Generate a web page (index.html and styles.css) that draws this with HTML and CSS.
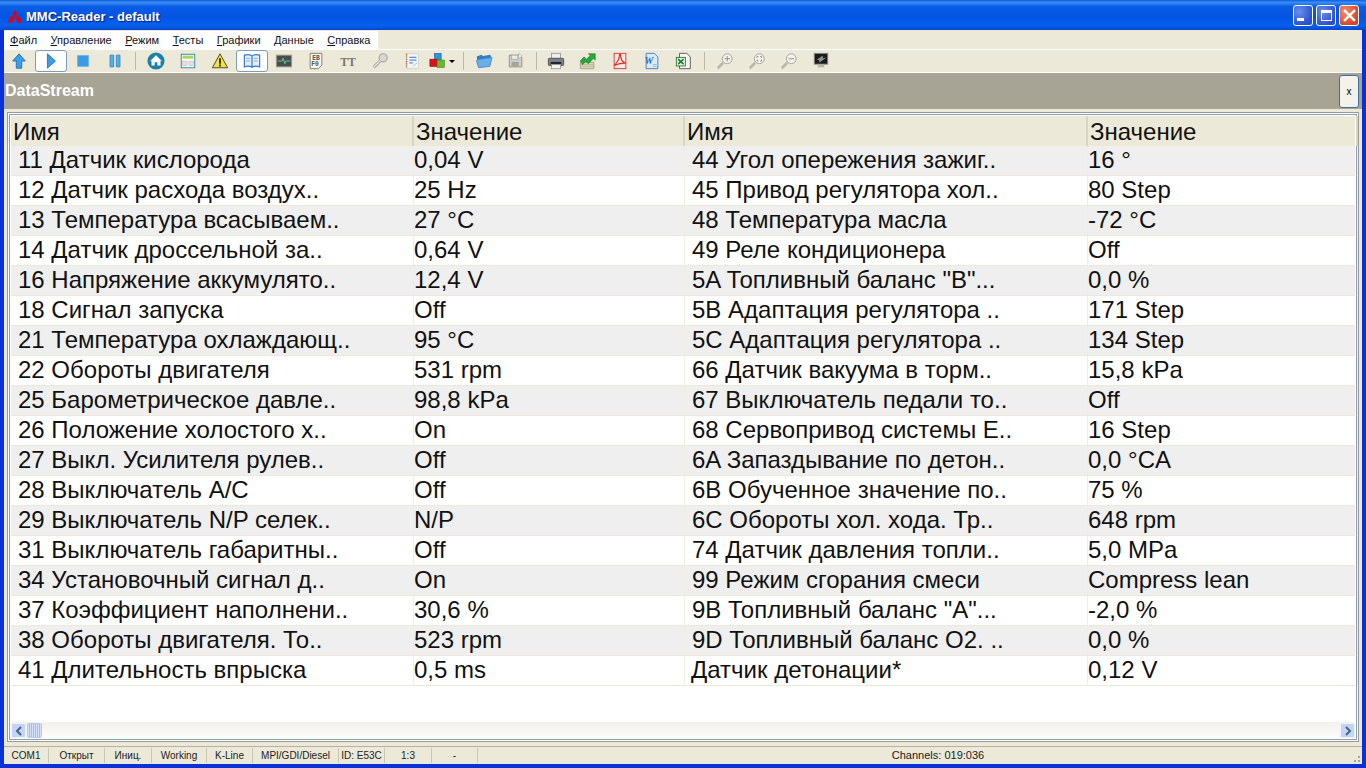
FILE: index.html
```html
<!DOCTYPE html>
<html lang="ru">
<head>
  <meta charset="UTF-8" />
  <title>MMC-Reader - default</title>
  <link rel="stylesheet" href="styles.css">
</head>
<body>
<div class="window">

  <div class="titlebar">
    <svg class="logo" viewBox="0 0 16 14"><path fill="#e0000f" d="M8 0l3.200 3.500L8 7 4.800 3.500zM8 7h5.200L16 14h-5.200zM8 7H2.800L0 14h5.200z"/></svg>
    <span class="title-text">MMC-Reader - default</span>
    <div class="caption-btns">
      <div class="cap-btn"><span class="cap-min"></span></div>
      <div class="cap-btn"><span class="cap-max"></span></div>
      <div class="cap-btn cap-close">
        <svg viewBox="0 0 12 12"><path d="M1 1l10 10M11 1L1 11" stroke="#fff" stroke-width="2.200" fill="none"/></svg>
      </div>
    </div>
  </div>

  <div class="client">
    <div class="menubar">
      <div class="menu-items">
        <span><u>Ф</u>айл</span>
        <span><u>У</u>правление</span>
        <span><u>Р</u>ежим</span>
        <span><u>Т</u>есты</span>
        <span><u>Г</u>рафики</span>
        <span><u>Д</u>анные</span>
        <span><u>С</u>правка</span>
      </div>
    </div>

    <div class="toolbar">
      <div class="tool"><svg viewBox="0 0 20 20"><path fill="#37a0e8" stroke="#1b6fb5" d="M10 2l7 8h-4v8H7v-8H3z"/></svg></div>
      <div class="tool active"><svg viewBox="0 0 20 20"><path fill="#3f9be0" stroke="#2a77bb" d="M6 2l9 8-9 8z"/></svg></div>
      <div class="tool"><svg viewBox="0 0 20 20"><rect x="4" y="4" width="12" height="12" fill="#3c9be4" stroke="#6fb5ea"/></svg></div>
      <div class="tool"><svg viewBox="0 0 20 20"><path fill="#5aaee8" stroke="#2d86cc" d="M4.500 3.500h4v13h-4zM11.500 3.500h4v13h-4z"/></svg></div>
      <div class="tool-sep"></div>
      <div class="tool"><svg viewBox="0 0 20 20"><circle cx="10" cy="10" r="9.500" fill="#1a82a8"/><path fill="#fff" d="M10 3.500l6.500 6.500H15v5h-3.500v-3.500h-3V15H5v-5H3.500z"/></svg></div>
      <div class="tool"><svg viewBox="0 0 20 20"><rect x="2.500" y="2.500" width="15" height="15" fill="#fff" stroke="#2a80a8"/><rect x="4" y="4" width="12" height="3.500" fill="#a9d85a"/><rect x="4" y="10" width="5" height="5" fill="#e2e2dc" stroke="#aaa" stroke-width=".5"/><rect x="11" y="10" width="5" height="5" fill="#e2e2dc" stroke="#aaa" stroke-width=".5"/></svg></div>
      <div class="tool"><svg viewBox="0 0 20 20"><path fill="#f3e23a" stroke="#3c3c30" d="M10 2l8.500 15.500h-17z"/><path stroke="#222" stroke-width="2" d="M10 7v6M10 14v2"/></svg></div>
      <div class="tool active"><svg viewBox="0 0 20 20"><path fill="#e3eefa" stroke="#3a78bd" stroke-width="1.300" d="M1.500 3.500c3-1 6-1 8.500 .8 2.500-1.800 5.500-1.800 8.500-.8v13c-3-1-6-1-8.500 .5-2.500-1.500-5.500-1.500-8.500-.5zM10 4.300V17"/><path stroke="#7fa8d6" d="M3.500 7h4.500M3.500 10h4.500M12 7h4.500M12 10h4.500"/></svg></div>
      <div class="tool"><svg viewBox="0 0 20 20"><rect x="1.500" y="3.500" width="17" height="13" fill="#4c4c4c" stroke="#9c9c94"/><path stroke="#5fd39a" fill="none" d="M3 10h5l1-3 2 6 1-3h5"/></svg></div>
      <div class="tool"><svg viewBox="0 0 20 20"><path fill="#f6f5ee" stroke="#77776f" d="M3.500 1.500h13v13l-4 4h-9z"/><text class="ico-hex" x="10" y="8.500">EB</text><text class="ico-hex" x="9" y="15.500">F0</text></svg></div>
      <div class="tool"><svg viewBox="0 0 20 20"><text class="ico-tt" x="10" y="15">TT</text></svg></div>
      <div class="tool"><svg viewBox="0 0 20 20"><circle cx="13.500" cy="6.500" r="4.500" fill="#d9d8d0" stroke="#a5a49c" stroke-width="1.200"/><path stroke="#a5a49c" stroke-width="3.500" d="M10.500 9.500L3 17"/><path stroke="#e5e4dc" stroke-width="1.500" d="M10.500 9.500L3 17"/></svg></div>
      <div class="tool"><svg viewBox="0 0 20 20"><rect x="4" y="2" width="13" height="16" fill="#f5f5f3" stroke="#c9c9c2" stroke-width=".7"/><path stroke="#b5562c" stroke-width="1.600" stroke-dasharray="1 1" d="M4 2v16"/><path stroke="#5f8fd6" stroke-width="1.300" d="M7 6h8M7 9h8M7 12h4"/><path stroke="#a9bfe0" d="M11 16l5-4"/></svg></div>
      <div class="tool tool-wide">
        <svg viewBox="0 0 20 20"><rect x="6" y="1.500" width="7.500" height="7.500" fill="#2a95dc" stroke="#17689f" stroke-width=".7"/><rect x="1" y="8" width="8" height="8" fill="#de1020" stroke="#991018" stroke-width=".7"/><rect x="9" y="9" width="8" height="8" fill="#6bb82c" stroke="#44821a" stroke-width=".7"/></svg>
        <span class="drop-arrow"></span>
      </div>
      <div class="tool-sep"></div>
      <div class="tool"><svg viewBox="0 0 20 20"><path fill="#2f7fc8" d="M2 5l5-2 2 1.500 8-1.500 1 3-14 3-1 5z"/><path fill="#6aaee8" stroke="#2e78bd" stroke-width=".7" d="M4.500 8L19 6l-2.500 10L4 17.500 1.500 9.500z"/></svg></div>
      <div class="tool"><svg viewBox="0 0 20 20"><path fill="#d0cfc6" stroke="#8f8e86" d="M2.500 3.500h11l3 3v10h-14z"/><rect x="5" y="3.500" width="7" height="4.500" fill="#ecebe3" stroke="#9a9991" stroke-width=".6"/><rect x="5" y="11" width="8" height="5.500" fill="#a5a49c"/><path fill="#f2f1ea" stroke="#999" stroke-width=".6" d="M13 1.500l4 3-4 3z"/></svg></div>
      <div class="tool-sep tool-sep-narrow"></div>
      <div class="tool"><svg viewBox="0 0 20 20"><rect x="5" y="1.500" width="10" height="6" fill="#eee" stroke="#9c9c9c"/><rect x="1.500" y="7" width="17" height="8" rx="1" fill="#7e8286" stroke="#4c5054"/><rect x="4" y="11" width="12" height="3" fill="#22262a"/><rect x="5" y="14" width="10" height="4.500" fill="#f4f4f4" stroke="#9c9c9c"/></svg></div>
      <div class="tool"><svg viewBox="0 0 20 20"><path fill="#ddd8bc" stroke="#a6a27e" d="M1.500 11.500h15v7h-15z"/><path fill="none" stroke="#b0ac88" stroke-width=".7" d="M2 14h14M2 16h14"/><path fill="#28a83c" stroke="#157a27" stroke-width=".7" d="M1.500 10l4-4.500 3 2.500 4-4-2-2h7.500v7l-2-2-5.500 6-3-2.500-3.500 3.500z"/></svg></div>
      <div class="tool"><svg viewBox="0 0 20 20"><rect x="3.500" y="1.500" width="13" height="17" fill="#fbe9e6" stroke="#cc3a3a"/><path fill="none" stroke="#e02a20" stroke-width="1.300" d="M9.500 2c0 5-1.500 9-6 13 4-1.500 8-3 13-2.500-4-1-6-4-6-10.500"/></svg></div>
      <div class="tool"><svg viewBox="0 0 20 20"><path fill="#dceafb" stroke="#3a78c8" d="M3.500 1.500h9l4 4v13h-13z"/><text class="ico-doc" x="6.500" y="13">W</text><path stroke="#8fb4e2" d="M11 14h4M11 16h4"/></svg></div>
      <div class="tool"><svg viewBox="0 0 20 20"><path fill="#f7f7f4" stroke="#55554f" d="M5 1.500h8l4 4v13H5z"/><rect x="1.500" y="6" width="10" height="9.500" fill="#e9f4e4" stroke="#1f7a34"/><path stroke="#1f7a34" stroke-width="1.800" d="M3.500 8l6 5.500M9.500 8l-6 5.500"/></svg></div>
      <div class="tool-sep"></div>
      <div class="tool"><svg viewBox="0 0 20 20"><path stroke="#b9b8ae" stroke-width="3" d="M8 12l-6 6"/><circle cx="12.500" cy="7.500" r="5.500" fill="#f2f1ea" stroke="#a2a198"/><path stroke="#8c8b83" d="M9.500 7.500h6M12.500 4.500v6"/></svg></div>
      <div class="tool"><svg viewBox="0 0 20 20"><path stroke="#b9b8ae" stroke-width="3" d="M8 12l-6 6"/><circle cx="12.500" cy="7.500" r="5.500" fill="#f2f1ea" stroke="#a2a198"/><path stroke="#8c8b83" fill="none" d="M10 6.500V5h1.500M13.500 5H15v1.500M15 8.500V10h-1.500M11.500 10H10V8.500"/></svg></div>
      <div class="tool"><svg viewBox="0 0 20 20"><path stroke="#b9b8ae" stroke-width="3" d="M8 12l-6 6"/><circle cx="12.500" cy="7.500" r="5.500" fill="#f2f1ea" stroke="#a2a198"/><path stroke="#8c8b83" d="M9.500 7.500h6"/></svg></div>
      <div class="tool"><svg viewBox="0 0 20 20"><rect x="2.500" y="1.500" width="15" height="12" fill="#1a1a1a" stroke="#8a8a84"/><path fill="#8f8f8f" d="M5 9l7-5v3l4-1-8 6v-3z"/><path fill="#b5b5ae" d="M7 14h6l1 3H6z"/></svg></div>
    </div>

    <div class="tabstrip">
      <span class="tab-title">DataStream</span>
      <button class="tab-close">x</button>
    </div>

    <div class="panel">
      <div class="grid">
        <div class="grid-row grid-head">
          <div>Имя</div><div>Значение</div><div>Имя</div><div>Значение</div>
        </div>
        <div class="grid-row"><div>11 Датчик кислорода</div><div>0,04 V</div><div>44 Угол опережения зажиг..</div><div>16 °</div></div>
        <div class="grid-row"><div>12 Датчик расхода воздух..</div><div>25 Hz</div><div>45 Привод регулятора хол..</div><div>80 Step</div></div>
        <div class="grid-row"><div>13 Температура всасываем..</div><div>27 °C</div><div>48 Температура масла</div><div>-72 °C</div></div>
        <div class="grid-row"><div>14 Датчик дроссельной за..</div><div>0,64 V</div><div>49 Реле кондиционера</div><div>Off</div></div>
        <div class="grid-row"><div>16 Напряжение аккумулято..</div><div>12,4 V</div><div>5A Топливный баланс "B"...</div><div>0,0 %</div></div>
        <div class="grid-row"><div>18 Сигнал запуска</div><div>Off</div><div>5B Адаптация регулятора ..</div><div>171 Step</div></div>
        <div class="grid-row"><div>21 Температура охлаждающ..</div><div>95 °C</div><div>5C Адаптация регулятора ..</div><div>134 Step</div></div>
        <div class="grid-row"><div>22 Обороты двигателя</div><div>531 rpm</div><div>66 Датчик вакуума в торм..</div><div>15,8 kPa</div></div>
        <div class="grid-row"><div>25 Барометрическое давле..</div><div>98,8 kPa</div><div>67 Выключатель педали то..</div><div>Off</div></div>
        <div class="grid-row"><div>26 Положение холостого х..</div><div>On</div><div>68 Сервопривод системы Е..</div><div>16 Step</div></div>
        <div class="grid-row"><div>27 Выкл. Усилителя рулев..</div><div>Off</div><div>6A Запаздывание по детон..</div><div>0,0 °CA</div></div>
        <div class="grid-row"><div>28 Выключатель A/C</div><div>Off</div><div>6B Обученное значение по..</div><div>75 %</div></div>
        <div class="grid-row"><div>29 Выключатель N/P селек..</div><div>N/P</div><div>6C Обороты хол. хода. Тр..</div><div>648 rpm</div></div>
        <div class="grid-row"><div>31 Выключатель габаритны..</div><div>Off</div><div>74 Датчик давления топли..</div><div>5,0 MPa</div></div>
        <div class="grid-row"><div>34 Установочный сигнал д..</div><div>On</div><div>99 Режим сгорания смеси</div><div>Compress lean</div></div>
        <div class="grid-row"><div>37 Коэффициент наполнени..</div><div>30,6 %</div><div>9B Топливный баланс "A"...</div><div>-2,0 %</div></div>
        <div class="grid-row"><div>38 Обороты двигателя. То..</div><div>523 rpm</div><div>9D Топливный баланс O2. ..</div><div>0,0 %</div></div>
        <div class="grid-row"><div>41 Длительность впрыска</div><div>0,5 ms</div><div class="no-id">Датчик детонации*</div><div>0,12 V</div></div>
      </div>
      <div class="hscroll">
        <div class="sb-btn"><svg viewBox="0 0 12 12"><path d="M8 2L4 6l4 4" fill="none" stroke="#4d6185" stroke-width="2"/></svg></div>
        <div class="sb-thumb"></div>
        <div class="sb-track"></div>
        <div class="sb-btn"><svg viewBox="0 0 12 12"><path d="M4 2l4 4-4 4" fill="none" stroke="#4d6185" stroke-width="2"/></svg></div>
      </div>
    </div>

    <div class="statusbar">
      <div class="st st-com">COM1</div>
      <div class="st st-open">Открыт</div>
      <div class="st st-init">Иниц.</div>
      <div class="st st-work">Working</div>
      <div class="st st-line">K-Line</div>
      <div class="st st-mpi">MPI/GDI/Diesel</div>
      <div class="st st-id">ID: E53C</div>
      <div class="st st-ratio">1:3</div>
      <div class="st st-dash">-</div>
      <div class="st st-channels">Channels: 019:036</div>
      <div class="grip"></div>
    </div>
  </div>

</div>
</body>
</html>
```

FILE: styles.css
```css
* {
  box-sizing: border-box;
  margin: 0;
  padding: 0;
}

body {
  width: 1366px;
  height: 768px;
  overflow: hidden;
  font-family: "Liberation Sans", Arial, sans-serif;
  background: #ece9d8;
}

.window {
  display: flex;
  flex-direction: column;
  height: 768px;
  background: #0831d9;
}

/* Title bar */
.titlebar {
  display: flex;
  align-items: center;
  height: 30px;
  flex-shrink: 0;
  padding: 3px 7px 0 8px;
  background: linear-gradient(180deg, #0a5fe0 0%, #3b8cf5 8%, #0a5ce6 22%, #0454e2 55%, #0660ee 85%, #0347c9 100%);
}

.logo {
  width: 14px;
  height: 13px;
  margin-right: 4px;
}

.title-text {
  font-size: 13px;
  font-weight: bold;
  color: #fff;
  text-shadow: 1px 1px 1px #0a1f80;
}

.caption-btns {
  display: flex;
  gap: 3px;
  margin-left: auto;
  margin-top: -3px;
}

.cap-btn {
  display: flex;
  align-items: center;
  justify-content: center;
  position: relative;
  width: 20px;
  height: 21px;
  border: 1px solid #fff;
  border-radius: 3px;
  background: radial-gradient(circle at 30% 30%, #6b8fea, #2a4fd0 75%);
}

.cap-close {
  background: radial-gradient(circle at 30% 30%, #ee9070, #d5451f 75%);
}

.cap-close svg {
  width: 13px;
  height: 13px;
}

.cap-min {
  width: 7px;
  height: 3px;
  margin: 8px 6px 0 0;
  background: #fff;
}

.cap-max {
  width: 11px;
  height: 11px;
  border: 1px solid #fff;
  border-top-width: 3px;
}

/* Client area */
.client {
  display: flex;
  flex-direction: column;
  flex: 1;
  margin: 0 4px 4px 4px;
  background: #ece9d8;
}

.menubar {
  height: 19px;
  flex-shrink: 0;
}

.menu-items {
  display: inline-flex;
  height: 19px;
  align-items: center;
  gap: 13.500px;
  padding: 0 8px 0 6px;
  background: #fff;
  font-size: 11px;
  color: #111;
}

.toolbar {
  display: flex;
  align-items: center;
  height: 24px;
  flex-shrink: 0;
  border-top: 1px solid #fff;
  border-bottom: 1px solid #fff;
}

.tool {
  display: flex;
  align-items: center;
  justify-content: center;
  width: 32px;
  height: 22px;
  flex-shrink: 0;
}

.tool:first-child {
  width: 31px;
  padding-right: 1px;
}

.tool svg {
  width: 18px;
  height: 18px;
}

.tool.active {
  background: #fff;
  border: 1px solid #7c9cbc;
  border-radius: 3px;
}

.tool-wide {
  width: 31px;
  justify-content: flex-start;
  padding-left: 1px;
}

.drop-arrow {
  margin-left: 2px;
  border-left: 3px solid transparent;
  border-right: 3px solid transparent;
  border-top: 3px solid #000;
}

.tool-sep {
  width: 1px;
  height: 18px;
  margin: 0 4px;
  flex-shrink: 0;
  background: #bdbaa8;
}

.tool-sep-narrow {
  margin-right: 3px;
}

.ico-hex {
  font-family: "Liberation Mono", monospace;
  font-size: 7px;
  font-weight: bold;
  fill: #55554f;
  text-anchor: middle;
}

.ico-tt {
  font-family: "Liberation Serif", serif;
  font-size: 13px;
  font-weight: bold;
  fill: #77766e;
  text-anchor: middle;
}

.ico-doc {
  font-family: "Liberation Serif", serif;
  font-size: 11px;
  font-weight: bold;
  font-style: italic;
  fill: #2a6cc8;
  text-anchor: middle;
}

/* Grey strip above the table */
.tabstrip {
  display: flex;
  align-items: center;
  justify-content: space-between;
  height: 36px;
  flex-shrink: 0;
  background: #a7a496;
  padding-right: 3px;
}

.tab-title {
  margin-left: 1px;
  font-size: 16px;
  font-weight: bold;
  color: #fff;
}

.tab-close {
  width: 20px;
  height: 33px;
  border: 1px solid #3a6ea5;
  border-radius: 3px;
  background: #f4f2e9;
  font-family: "Liberation Sans", Arial, sans-serif;
  font-size: 10px;
  color: #000;
}

/* Table panel */
.panel {
  display: flex;
  flex-direction: column;
  height: 630px;
  margin: 3px 3px 0 3px;
  padding: 2px;
  background: #fff;
  border: 1px solid #9a9a94;
  box-shadow: inset 0 0 0 1px #ffffff, inset 0 0 0 2px #8b9fb5;
}

.grid {
  flex: 1;
  margin: 1px 1px 0 1px;
}

.grid-row {
  display: grid;
  grid-template-columns: 403px 271px 403px 270px;
  height: 30px;
  font-size: 24px;
  line-height: 28px;
  color: #111;
  border-bottom: 1px solid #ece9d8;
}

.grid-row:nth-child(even) {
  background: #efefef;
}

.grid-row > div {
  overflow: hidden;
  white-space: nowrap;
  border-right: 1px solid #f0eee2;
}

.grid-row > div:nth-child(odd) {
  padding-left: 7px;
}

.grid-row > div.no-id {
  padding-left: 6px;
}

.grid-row.grid-head {
  background: #ece9d8;
  border-bottom: 0;
  line-height: 31px;
}

.grid-row.grid-head > div {
  padding-left: 2px;
  border-right: 2px solid #d8d5c4;
}

.hscroll {
  display: flex;
  align-items: center;
  height: 17px;
  flex-shrink: 0;
  margin: 0 1px;
  background: linear-gradient(180deg, #f3f1ec, #fdfdfb);
}

.sb-btn {
  display: flex;
  align-items: center;
  justify-content: center;
  width: 15px;
  height: 15px;
  border-radius: 2px;
  background: #c4d4f4;
  border: 1px solid #eef3fc;
}

.sb-btn svg {
  width: 12px;
  height: 12px;
}

.sb-thumb {
  width: 15px;
  height: 15px;
  margin-left: 1px;
  border: 1px solid #b9c9ea;
  border-radius: 2px;
  background: repeating-linear-gradient(90deg, #d6e1f8 0 1px, #a9bce6 1px 2px);
}

.sb-track {
  flex: 1;
}

/* Status bar */
.statusbar {
  display: flex;
  align-items: center;
  height: 21px;
  margin-top: 4px;
  border-top: 1px solid #b5b2a3;
  font-size: 10px;
  color: #222;
  position: relative;
  flex: 1;
}

.st {
  height: 15px;
  line-height: 15px;
  text-align: center;
  white-space: nowrap;
  border-right: 1px solid #c9c6b5;
}

.st-com { width: 45px; }
.st-open { width: 56px; }
.st-init { width: 47px; }
.st-work { width: 55px; }
.st-line { width: 46px; }
.st-mpi { width: 86px; }
.st-id { width: 46px; }
.st-ratio { width: 47px; }
.st-dash { width: 46px; }

.st-channels {
  flex: 1;
  border-right: 0;
  padding-left: 36px;
  font-size: 11px;
}

.grip {
  position: absolute;
  right: 0;
  bottom: 0;
  width: 12px;
  height: 12px;
  background: radial-gradient(circle at 1px 1px, #a9a698 1px, transparent 1.200px) 0 0 / 4px 4px;
  clip-path: polygon(100% 0, 100% 100%, 0 100%);
}
```
